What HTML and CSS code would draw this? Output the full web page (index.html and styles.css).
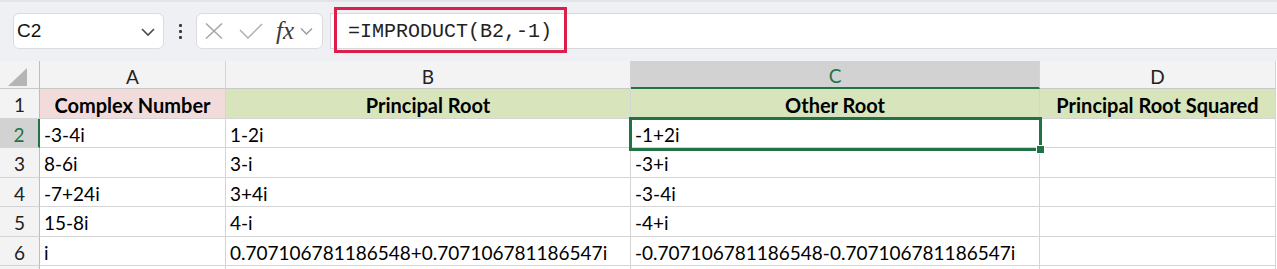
FILE: index.html
```html
<!DOCTYPE html>
<html lang="en">
<head>
    <meta charset="UTF-8">
    <title>IMPRODUCT</title>
    <link rel="stylesheet" href="styles.css">
</head>
<body>
    <div class="toolbar">
        <div class="name-box">
            <span class="cell-ref">C2</span>
            <svg class="chevron" width="14" height="10" viewBox="0 0 14 10"><path d="M1 2 L7 8 L13 2" fill="none" stroke="#4a4a4a" stroke-width="1.6"/></svg>
        </div>
        <div class="grip"><span></span><span></span><span></span></div>
        <div class="fn-box">
            <svg width="18" height="16" viewBox="0 0 18 16"><path d="M1 0.5 L17 15.5 M17 0.5 L1 15.5" stroke="#a6a6a6" stroke-width="1.5"/></svg>
            <svg class="check" width="24" height="16" viewBox="0 0 24 16"><path d="M1 7 L9 15 L23 1" fill="none" stroke="#b0b0b0" stroke-width="1.5"/></svg>
            <span class="fx">fx</span>
            <svg class="chevron-sm" width="13" height="9" viewBox="0 0 13 9"><path d="M1 1.5 L6.5 7 L12 1.5" fill="none" stroke="#9a9a9a" stroke-width="1.4"/></svg>
        </div>
        <div class="formula-bar">
            <span class="formula">=IMPRODUCT(B2,-1)</span>
            <div class="highlight"></div>
        </div>
    </div>

    <div class="sheet">
        <div class="corner"><div class="triangle"></div></div>
        <div class="col-head">A</div>
        <div class="col-head">B</div>
        <div class="col-head active">C</div>
        <div class="col-head">D</div>

        <div class="row-head">1</div>
        <div class="cell title pink">Complex Number</div>
        <div class="cell title green">Principal Root</div>
        <div class="cell title green">Other Root</div>
        <div class="cell title green">Principal Root Squared</div>

        <div class="row-head active">2</div>
        <div class="cell">-3-4i</div>
        <div class="cell">1-2i</div>
        <div class="cell">-1+2i</div>
        <div class="cell"></div>

        <div class="row-head">3</div>
        <div class="cell">8-6i</div>
        <div class="cell">3-i</div>
        <div class="cell">-3+i</div>
        <div class="cell"></div>

        <div class="row-head">4</div>
        <div class="cell">-7+24i</div>
        <div class="cell">3+4i</div>
        <div class="cell">-3-4i</div>
        <div class="cell"></div>

        <div class="row-head">5</div>
        <div class="cell">15-8i</div>
        <div class="cell">4-i</div>
        <div class="cell">-4+i</div>
        <div class="cell"></div>

        <div class="row-head">6</div>
        <div class="cell">i</div>
        <div class="cell">0.707106781186548+0.707106781186547i</div>
        <div class="cell">-0.707106781186548-0.707106781186547i</div>
        <div class="cell"></div>

        <!-- next row, only its top edge is in view -->
        <div class="row-head"></div>
        <div class="cell"></div>
        <div class="cell"></div>
        <div class="cell"></div>
        <div class="cell"></div>

        <!-- selection of C2 -->
        <div class="selection"><div class="fill-handle"></div></div>
    </div>
</body>
</html>
```

FILE: styles.css
```css
:root {
    --toolbar-bg: #eef0f3;
    --grid-line: #d4d4d4;
    --head-bg: #f3f3f3;
    --head-line: #c8c8c8;
    --active-head: #d2d2d2;
    --excel-green: #217346;
    --pink: #f2dcdb;
    --green: #d8e4bc;
    --mark: #dc1f4a;
}

* {
    margin: 0;
    padding: 0;
    box-sizing: border-box;
}

body {
    background: #ffffff;
    font-family: Lato, "Open Sans", sans-serif;
    color: #000;
    overflow: hidden;
}

/* Formula toolbar */
.toolbar {
    height: 61px;
    background: var(--toolbar-bg);
    border-top: 2px solid #e2e4e8;
    padding: 11px 0 12px 13px;
    display: flex;
}

.name-box {
    width: 151px;
    background: #fff;
    border: 1px solid #dadcdf;
    border-radius: 6px;
    display: flex;
    align-items: center;
    justify-content: space-between;
    padding: 0 8px 0 3px;
}

.cell-ref {
    font-family: "Liberation Sans", Arial, sans-serif;
    font-size: 19px;
    color: #111;
}

.chevron {
    margin-top: 2px;
}

.grip {
    width: 32px;
    display: flex;
    flex-direction: column;
    align-items: center;
    justify-content: center;
    gap: 3px;
}

.grip span {
    width: 3px;
    height: 3px;
    background: #3c3c3c;
    border-radius: 1px;
}

.fn-box {
    width: 127px;
    background: #fff;
    border: 1px solid #dadcdf;
    border-radius: 6px;
    display: flex;
    align-items: center;
    padding: 0 0 0 8px;
}

.check {
    margin-left: 16px;
}

.fx {
    font-family: "Liberation Serif", serif;
    font-style: italic;
    font-size: 25px;
    color: #3a3a3a;
    margin-left: 13px;
    line-height: 1;
    margin-top: -2px;
}

.chevron-sm {
    margin-left: 6px;
}

.formula-bar {
    flex: 1;
    margin-left: 7px;
    background: #fff;
    border-top: 1px solid #d6d8db;
    border-bottom: 1px solid #d6d8db;
    border-left: 1px solid #d6d8db;
    display: flex;
    align-items: center;
    padding-left: 17px;
    position: relative;
}

.formula {
    font-family: "Liberation Mono", monospace;
    font-size: 20px;
    color: #222;
}

/* annotation around the formula */
.highlight {
    position: absolute;
    left: 3px;
    top: -7px;
    width: 233px;
    height: 46px;
    border: 3px solid var(--mark);
}

/* Sheet grid */
.sheet {
    position: relative;
    display: grid;
    grid-template-columns: 40px 186px 405px 409px 236px;
    grid-template-rows: 28px 30px 29px 30px 29px 30px 29px 30px;
    font-size: 19px;
}

.corner,
.col-head,
.row-head {
    background: var(--head-bg);
    border-right: 1px solid var(--grid-line);
    border-bottom: 1px solid var(--head-line);
    display: flex;
    align-items: center;
    justify-content: center;
    color: #222;
}

.col-head {
    padding-top: 3px;
}

.corner,
.row-head {
    border-right: 1px solid #bdbdbd;
}

.row-head {
    border-bottom: 1px solid var(--grid-line);
    padding-top: 2px;
}

.triangle {
    width: 19px;
    height: 18px;
    margin: 5px 0 0 -4px;
    background: #b5b5b5;
    clip-path: polygon(100% 0, 100% 100%, 0 100%);
}

.col-head.active {
    background: var(--active-head);
    color: var(--excel-green);
    border-bottom: 2px solid var(--excel-green);
}

.row-head.active {
    background: var(--active-head);
    color: var(--excel-green);
    border-right: 2px solid var(--excel-green);
}

.cell {
    border-right: 1px solid var(--grid-line);
    border-bottom: 1px solid var(--grid-line);
    display: flex;
    align-items: center;
    padding: 2px 4px 0;
    white-space: nowrap;
}

.cell.title {
    justify-content: center;
    font-weight: 700;
    font-size: 20px;
}

.cell.pink {
    background: var(--pink);
}

.cell.green {
    background: var(--green);
}

.selection {
    position: absolute;
    left: 629px;
    top: 56px;
    width: 413px;
    height: 34px;
    border: 3px solid var(--excel-green);
}

.fill-handle {
    position: absolute;
    right: -6px;
    bottom: -6px;
    width: 9px;
    height: 9px;
    background: var(--excel-green);
    border: 1px solid #fff;
}
```
